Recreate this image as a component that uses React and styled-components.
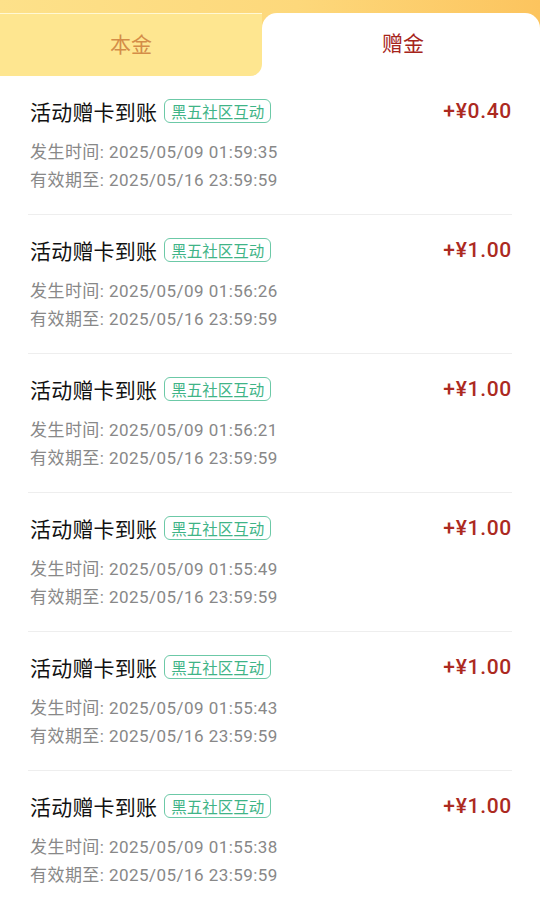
import React from "react";
import styled, { createGlobalStyle } from "styled-components";

const GlobalStyle = createGlobalStyle`
  html, body {
    margin: 0;
    padding: 0;
    background: #fff;
  }
  body {
    font-family: Roboto, "Noto Sans CJK SC", sans-serif;
    -webkit-font-smoothing: antialiased;
  }
`;

const records = [
  { amount: "+¥0.40", time: "2025/05/09 01:59:35" },
  { amount: "+¥1.00", time: "2025/05/09 01:56:26" },
  { amount: "+¥1.00", time: "2025/05/09 01:56:21" },
  { amount: "+¥1.00", time: "2025/05/09 01:55:49" },
  { amount: "+¥1.00", time: "2025/05/09 01:55:43" },
  { amount: "+¥1.00", time: "2025/05/09 01:55:38" }
];

const Page = styled.div`
  width: 540px;
  min-height: 905px;
  background: #fff;
  overflow: hidden;
`;

const Header = styled.div`
  display: flex;
  padding-top: 13px;
  background: linear-gradient(to bottom, transparent 50%, #fff 50%),
    linear-gradient(90deg, #fde18a 0%, #fdd87b 55%, #fcc45e 100%);
`;

const Tab = styled.div`
  display: flex;
  align-items: center;
  justify-content: center;
  height: 63px;
  padding-bottom: 5px;
  font-family: "Noto Sans CJK SC", sans-serif;
  font-size: 21px;
  box-sizing: border-box;
  ${({ active }) =>
    active
      ? `
    flex: 1;
    background: #fff;
    color: #a6241b;
    border-radius: 15px 15px 0 0;
    padding-left: 4px;
  `
      : `
    width: 262px;
    background: #fee690;
    color: #d48d48;
    border-bottom-right-radius: 12px;
    border-top: 1px solid rgba(255, 250, 220, 0.9);
  `};
`;

const List = styled.div`
  padding: 0 28px;
`;

const Row = styled.div`
  padding: 21px 0 20px 2px;
  border-bottom: 1px solid ${({ last }) => (last ? "transparent" : "#eeeeee")};
`;

const TitleLine = styled.div`
  display: flex;
  align-items: center;
  height: 28px;
`;

const Title = styled.span`
  font-family: "Noto Sans CJK SC", sans-serif;
  font-size: 21px;
  color: #111;
  letter-spacing: 0.2px;
`;

const Tag = styled.span`
  margin-left: 7px;
  height: 24px;
  padding: 0 6px;
  display: inline-flex;
  align-items: center;
  border: 1.5px solid #6cc9a7;
  border-radius: 6px;
  color: #3fb487;
  font-family: "Noto Sans CJK SC", sans-serif;
  font-size: 15.5px;
  box-sizing: border-box;
`;

const Amount = styled.span`
  margin-left: auto;
  font-family: Roboto, "Noto Sans CJK SC", sans-serif;
  font-size: 21px;
  font-weight: 500;
  letter-spacing: 0.7px;
  color: #ac2a1f;
`;

const Meta = styled.div`
  margin-top: 13px;
`;

const MetaLine = styled.div`
  height: 28px;
  line-height: 28px;
  font-family: Roboto, "Noto Sans CJK SC", sans-serif;
  font-size: 17px;
  letter-spacing: 0.45px;
  color: #888888;
`;

const Record = ({ amount, time, last }) => (
  <Row last={last}>
    <TitleLine>
      <Title>活动赠卡到账</Title>
      <Tag>黑五社区互动</Tag>
      <Amount>{amount}</Amount>
    </TitleLine>
    <Meta>
      <MetaLine>发生时间: {time}</MetaLine>
      <MetaLine>有效期至: 2025/05/16 23:59:59</MetaLine>
    </Meta>
  </Row>
);

const App = () => (
  <Page>
    <GlobalStyle />
    <Header>
      <Tab>本金</Tab>
      <Tab active>赠金</Tab>
    </Header>
    <List>
      {records.map((r, i) => (
        <Record key={i} {...r} last={i === records.length - 1} />
      ))}
    </List>
  </Page>
);

export default App;
